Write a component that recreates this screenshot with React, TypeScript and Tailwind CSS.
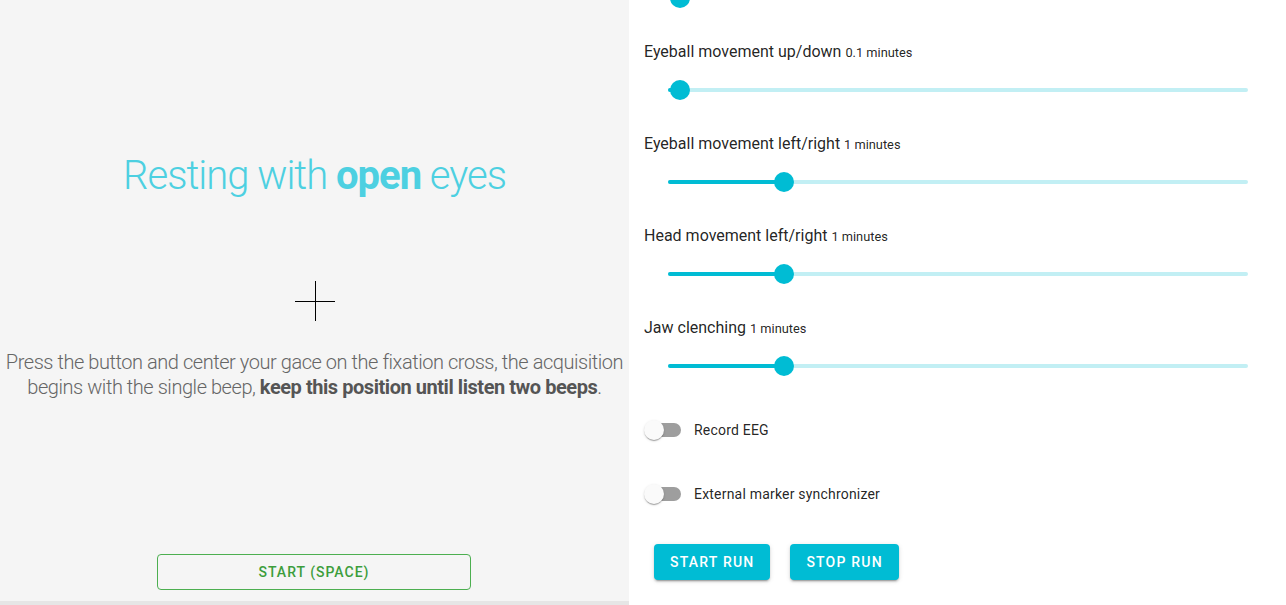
import React from "react";

const sliders = [
  { label: "", value: 0.1 },
  { label: "Eyeball movement up/down", value: 0.1 },
  { label: "Eyeball movement left/right", value: 1 },
  { label: "Head movement left/right", value: 1 },
  { label: "Jaw clenching", value: 1 },
];

function Slider({ value }: { value: number }) {
  const pct = (value / 5) * 100;
  return (
    <div className="relative mx-6 mt-4 h-5">
      <div className="absolute left-0 right-0 top-2 h-1 rounded-full bg-[#c2eff4]" />
      <div
        className="absolute left-0 top-2 h-1 rounded-full bg-[#00bcd4]"
        style={{ width: `${pct}%` }}
      />
      <div
        className="absolute top-0 h-5 w-5 -translate-x-1/2 rounded-full bg-[#00bcd4]"
        style={{ left: `${pct}%` }}
      />
    </div>
  );
}

function Switch({ label }: { label: string }) {
  return (
    <div className="flex h-[38px] items-center ml-[-9px]">
      <div className="relative h-[38px] w-[58px] shrink-0">
        <div className="absolute left-3 top-3 h-[14px] w-[34px] rounded-full bg-[#9e9e9e]" />
        <div className="absolute left-[9px] top-[9px] h-5 w-5 rounded-full bg-[#fafafa] shadow-[0px_2px_1px_-1px_rgba(0,0,0,0.2),0px_1px_1px_0px_rgba(0,0,0,0.14),0px_1px_3px_0px_rgba(0,0,0,0.12)]" />
      </div>
      <span className="ml-px text-[14px] tracking-[0.2px] text-[rgba(0,0,0,0.87)]">{label}</span>
    </div>
  );
}

export default function App() {
  return (
    <div
      className="flex h-[605px] w-full overflow-hidden bg-white"
      style={{ fontFamily: "Roboto, 'Noto Sans', sans-serif" }}
    >
      <div className="flex w-[629px] shrink-0 flex-col bg-[#f5f5f5]">
        <div className="flex flex-1 flex-col items-center">
          <h1 className="mt-[152px] text-[40px] font-light leading-[48px] tracking-[-1px] text-[#4dd0e1]">
            Resting with <span className="font-bold">open</span> eyes
          </h1>
          <svg className="mt-[81px]" width="40" height="40" viewBox="0 0 40 40">
            <line x1="0" y1="20.5" x2="40" y2="20.5" stroke="#000" strokeWidth="1" />
            <line x1="20.5" y1="0" x2="20.5" y2="40" stroke="#000" strokeWidth="1" />
          </svg>
          <p className="mt-[29px] whitespace-nowrap text-center text-[20px] font-light leading-[25px] tracking-[-0.45px] text-[#666]">
            Press the button and center your gace on the fixation cross, the acquisition
            <br />
            begins with the single beep,{" "}
            <span className="font-bold text-[#555]">keep this position until listen two beeps</span>.
          </p>
          <button className="ml-[157px] mt-[154px] h-[36px] w-[314px] self-start rounded border border-[#4caf50] text-[14px] font-medium tracking-[1px] text-[#3c9d3c]">
            START (SPACE)
          </button>
        </div>
        <div className="h-1 bg-[#e6e6e6]" />
      </div>
      <div className="flex-1 overflow-hidden pl-[15px] pr-[14px]">
        <div className="mt-[-52px] flex flex-col gap-8">
          {sliders.map((s, i) => (
            <div key={i}>
              <div className="h-6 text-[16px] leading-6 text-[rgba(0,0,0,0.87)]">
                {s.label && (
                  <>
                    {s.label} <span className="text-[12.8px]">{s.value} minutes</span>
                  </>
                )}
              </div>
              <Slider value={s.value} />
            </div>
          ))}
        </div>
        <div className="mt-[35px] flex flex-col gap-[26px]">
          <Switch label="Record EEG" />
          <Switch label="External marker synchronizer" />
        </div>
        <div className="ml-[10px] mt-[31px] flex gap-5">
          <button className="h-9 rounded bg-[#00bcd4] px-4 text-[14px] font-medium tracking-[1.2px] text-white shadow-[0px_3px_1px_-2px_rgba(0,0,0,0.2),0px_2px_2px_0px_rgba(0,0,0,0.14),0px_1px_5px_0px_rgba(0,0,0,0.12)]">
            START RUN
          </button>
          <button className="h-9 rounded bg-[#00bcd4] px-4 text-[14px] font-medium tracking-[1.2px] text-white shadow-[0px_3px_1px_-2px_rgba(0,0,0,0.2),0px_2px_2px_0px_rgba(0,0,0,0.14),0px_1px_5px_0px_rgba(0,0,0,0.12)]">
            STOP RUN
          </button>
        </div>
      </div>
    </div>
  );
}
